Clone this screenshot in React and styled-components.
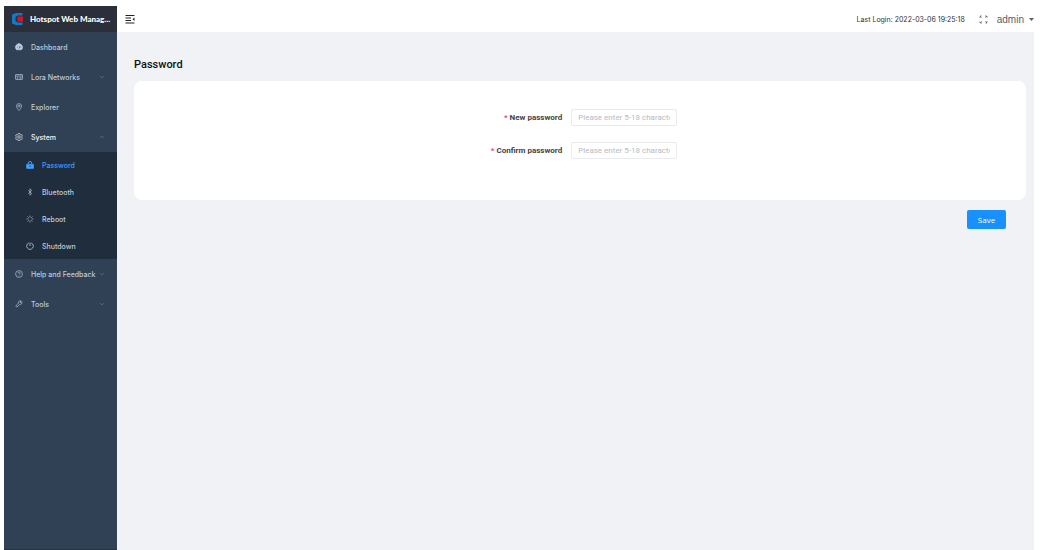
import React, { useState } from 'react';
import styled, { createGlobalStyle, css } from 'styled-components';

const menus = [
  { id: 'dashboard', label: 'Dashboard', icon: 'dashboard' },
  { id: 'lora', label: 'Lora Networks', icon: 'lora', children: [] },
  { id: 'explorer', label: 'Explorer', icon: 'pin' },
  {
    id: 'system',
    label: 'System',
    icon: 'gear',
    children: [
      { id: 'password', label: 'Password', icon: 'lock' },
      { id: 'bluetooth', label: 'Bluetooth', icon: 'bluetooth' },
      { id: 'reboot', label: 'Reboot', icon: 'reboot' },
      { id: 'shutdown', label: 'Shutdown', icon: 'power' },
    ],
  },
  { id: 'help', label: 'Help and Feedback', icon: 'help', children: [] },
  { id: 'tools', label: 'Tools', icon: 'wrench', children: [] },
];

const paths = {
  dashboard: (
    <>
      <path d='M3 13.5A7 7 0 1 1 13 13.5Z' fill='currentColor' />
      <path d='M8 11 10.5 6M4 9h1M5.5 5.5l.6.6M11.5 9h1' stroke='#304156' />
    </>
  ),
  lora: (
    <>
      <rect x='1' y='3' width='14' height='10' rx='1' />
      <path d='M1 6h14M3.5 8.5h3M3.5 10.7h3M9 8.5h4M9 10.7h4' />
    </>
  ),
  pin: (
    <>
      <path d='M8 15C5 11.5 3 9 3 6.2a5 5 0 0 1 10 0C13 9 11 11.5 8 15Z' />
      <circle cx='8' cy='6.2' r='2' />
    </>
  ),
  gear: (
    <>
      <path d='M6.5 1h3l.6 2 1.5.8 2-.5 1.4 2.5L13.6 7.3v1.5l1.4 1.5-1.4 2.5-2-.5-1.5.8-.6 2h-3l-.6-2-1.5-.8-2 .5L1 10.3l1.4-1.5V7.3L1 5.8l1.4-2.5 2 .5 1.5-.8Z' />
      <circle cx='8' cy='8' r='2.5' />
    </>
  ),
  lock: (
    <>
      <path d='M4.5 7V4.5a3.5 3.5 0 0 1 7 0V7' strokeWidth='2' />
      <rect x='1' y='6.5' width='14' height='8.5' rx='1' fill='currentColor' />
      <path d='M8 9v3' stroke='#1f2d3d' strokeWidth='1.6' />
    </>
  ),
  bluetooth: <path d='M4.5 4.5 11.5 11 8 14.5v-13L11.5 5l-7 6.5' />,
  reboot: <path d='M8 1v4M8 11v4M1 8h4M11 8h4M3 3l2.5 2.5M10.5 10.5 13 13M3 13l2.5-2.5M10.5 5.5 13 3' />,
  power: (
    <>
      <path d='M5.5 2A6.6 6.6 0 1 0 10.5 2' strokeWidth='1.6' />
      <path d='M8 1v7' strokeWidth='1.6' />
    </>
  ),
  help: (
    <>
      <circle cx='8' cy='8' r='6.8' />
      <path d='M6 6.3a2 2 0 1 1 3 1.7q-1 .6-1 1.5M8 11v1.2' />
    </>
  ),
  wrench: <path d='M13.6 3.2 11 5.5 9.8 4.3 12 1.8C9 .8 6.5 3 7 6L1.5 12l2 2.2L9.5 9c3 .6 5.3-2.5 4.1-5.8Z' />,
  down: <path d='m2 5 6 6 6-6' />,
};

const Icon = ({ name, size = 8 }) => (
  <svg width={size} height={size} viewBox='0 0 16 16' fill='none' stroke='currentColor' strokeWidth='1.3' aria-hidden='true'>
    {paths[name]}
  </svg>
);

const fields = [
  { id: 'new-password', label: 'New password' },
  { id: 'confirm-password', label: 'Confirm password' },
];

const App = () => {
  const [openMenu, setOpenMenu] = useState('system');
  const [active, setActive] = useState('password');

  return (
    <>
      <GlobalStyle />
      <Page>
        <Sidebar>
          <Brand>
            <svg width='13' height='14' viewBox='0 0 26 28' aria-hidden='true'>
              <path d='M23 2H10L2 5v18l8 3h13v-5H13l-4-3V10l4-3h10Z' fill='#1479c4' />
              <path d='M13 9h11v10H13Z' fill='#d9122d' />
            </svg>
            <BrandName>Hotspot Web Manag...</BrandName>
          </Brand>
          <nav>
            {menus.map((menu) => (
              <React.Fragment key={menu.id}>
                <MenuItem
                  type='button'
                  $open={openMenu === menu.id}
                  onClick={() => setOpenMenu(openMenu === menu.id ? '' : menu.id)}
                >
                  <Icon name={menu.icon} />
                  <MenuLabel>{menu.label}</MenuLabel>
                  {menu.children && (
                    <Arrow $open={openMenu === menu.id}>
                      <Icon name='down' size={6} />
                    </Arrow>
                  )}
                </MenuItem>
                {openMenu === menu.id && menu.children?.length > 0 && (
                  <SubMenu>
                    {menu.children.map((item) => (
                      <SubMenuItem key={item.id} type='button' $active={active === item.id} onClick={() => setActive(item.id)}>
                        <Icon name={item.icon} />
                        <MenuLabel>{item.label}</MenuLabel>
                      </SubMenuItem>
                    ))}
                  </SubMenu>
                )}
              </React.Fragment>
            ))}
          </nav>
        </Sidebar>
        <Main>
          <Header>
            <IconButton type='button' aria-label='Toggle sidebar'>
              <svg width='10' height='9' viewBox='0 0 20 18' fill='none' stroke='#222' strokeWidth='2' aria-hidden='true'>
                <path d='M1 1h18M1 6h11M1 11h11M1 16h18' />
                <path d='m19 5-4 3.500 4 3.500Z' fill='#222' stroke='none' />
              </svg>
            </IconButton>
            <LastLogin>Last Login: 2022-03-06 19:25:18</LastLogin>
            <IconButton type='button' aria-label='Full screen'>
              <svg width='9' height='9' viewBox='0 0 18 18' fill='none' stroke='#5a5e66' strokeWidth='1.600' aria-hidden='true'>
                <path d='M2 6V2h4M12 2h4v4M16 12v4h-4M6 16H2v-4M2 2l4 4M16 2l-4 4M16 16l-4-4M2 16l4-4' strokeDasharray='3 1' />
              </svg>
            </IconButton>
            <UserButton type='button'>
              admin
              <svg width='5' height='3' viewBox='0 0 10 6' aria-hidden='true'>
                <path d='M0 0h10L5 6Z' fill='#5a5e66' />
              </svg>
            </UserButton>
          </Header>
          <Content>
            <Title>Password</Title>
            <form onSubmit={(e) => e.preventDefault()}>
              <Card>
                {fields.map((field) => (
                  <Field key={field.id}>
                    <Label htmlFor={field.id}>{field.label}</Label>
                    <Input id={field.id} type='password' placeholder='Please enter 5-18 characters' />
                  </Field>
                ))}
              </Card>
              <Actions>
                <SaveButton type='submit'>Save</SaveButton>
              </Actions>
            </form>
          </Content>
        </Main>
      </Page>
    </>
  );
};

export default App;

const GlobalStyle = createGlobalStyle`
  * {
    box-sizing: border-box;
  }
  body {
    margin: 0;
    background: #fff;
    font-family: Roboto, 'Liberation Sans', sans-serif;
  }
  button {
    padding: 0;
    border: 0;
    background: none;
    font-family: inherit;
    cursor: pointer;
  }
  svg {
    display: block;
    flex: none;
  }
`;

const Page = styled.div`
  display: flex;
  min-height: 100vh;
  padding: 6px 16px 0 4px;
`;

const Sidebar = styled.aside`
  flex: 0 0 113px;
  min-width: 0;
  background: #304156;
  border-bottom: 1px solid #263347;
  font-family: Inter, sans-serif;
`;

const Brand = styled.div`
  display: flex;
  align-items: center;
  gap: 6px;
  height: 26px;
  padding-left: 7px;
  background: #2b2f3a;
`;

const BrandName = styled.h1`
  margin: 0;
  color: #fff;
  font-family: Lato, sans-serif;
  font-size: 8px;
  font-weight: 900;
  white-space: nowrap;
`;

const MenuItem = styled.button`
  display: flex;
  align-items: center;
  width: 100%;
  height: 30px;
  padding: 0 12px 0 11px;
  color: #bfcbd9;
  white-space: nowrap;
  ${(props) =>
    props.$open &&
    css`
      color: #f4f4f5;
    `}
`;

const MenuLabel = styled.span`
  padding-left: 8px;
  font-size: 7px;
  font-weight: 500;
`;

const Arrow = styled.span`
  margin-left: auto;
  color: #7f8c9c;
  ${(props) =>
    props.$open &&
    css`
      transform: rotate(180deg);
    `}
`;

const SubMenu = styled.div`
  display: grid;
  gap: 1px;
  background: #1f2d3d;
`;

const SubMenuItem = styled.button`
  display: flex;
  align-items: center;
  height: 26px;
  padding-left: 22px;
  color: ${(props) => (props.$active ? '#409eff' : '#bfcbd9')};
`;

const Main = styled.div`
  display: flex;
  flex: 1;
  flex-direction: column;
  min-width: 0;
`;

const Header = styled.header`
  display: flex;
  align-items: center;
  height: 26px;
  padding-left: 8px;
  background: #fff;
`;

const IconButton = styled.button`
  display: flex;
`;

const LastLogin = styled.span`
  margin: 0 14px 0 auto;
  color: #303133;
  font-family: Inter, sans-serif;
  font-size: 7px;
`;

const UserButton = styled.button`
  display: flex;
  align-items: center;
  gap: 5px;
  margin-left: 9px;
  color: #5a5e66;
  font-family: 'Liberation Sans', Arial, sans-serif;
  font-size: 10px;
`;

const Content = styled.main`
  flex: 1;
  padding: 24px 8px 24px 17px;
  background: #f0f2f5;
`;

const Title = styled.h2`
  margin: 0 0 8px;
  color: #111;
  font-size: 11px;
  font-weight: 500;
  line-height: 17px;
`;

const Card = styled.div`
  display: grid;
  align-content: start;
  gap: 16px;
  padding: 28px 0 41px;
  border-radius: 8px;
  background: #fff;
`;

const Field = styled.div`
  display: grid;
  grid-template-columns: 48% 106px;
  column-gap: 9px;
  align-items: center;
`;

const Label = styled.label`
  color: #444;
  font-size: 8px;
  font-weight: 700;
  text-align: right;
  &::before {
    content: '* ';
    color: #f5476a;
  }
`;

const Input = styled.input`
  width: 100%;
  height: 17px;
  padding: 0 6px;
  border: 1px solid #eaebee;
  border-radius: 2px;
  color: #303133;
  font-family: inherit;
  font-size: 8px;
  &::placeholder {
    color: #b8bbc0;
  }
`;

const Actions = styled.div`
  display: flex;
  justify-content: flex-end;
  padding: 10px 20px 0 0;
`;

const SaveButton = styled.button`
  width: 39px;
  height: 19px;
  border-radius: 2px;
  background: #1890ff;
  color: #fff;
  font-family: 'Open Sans', sans-serif;
  font-size: 8px;
`;
